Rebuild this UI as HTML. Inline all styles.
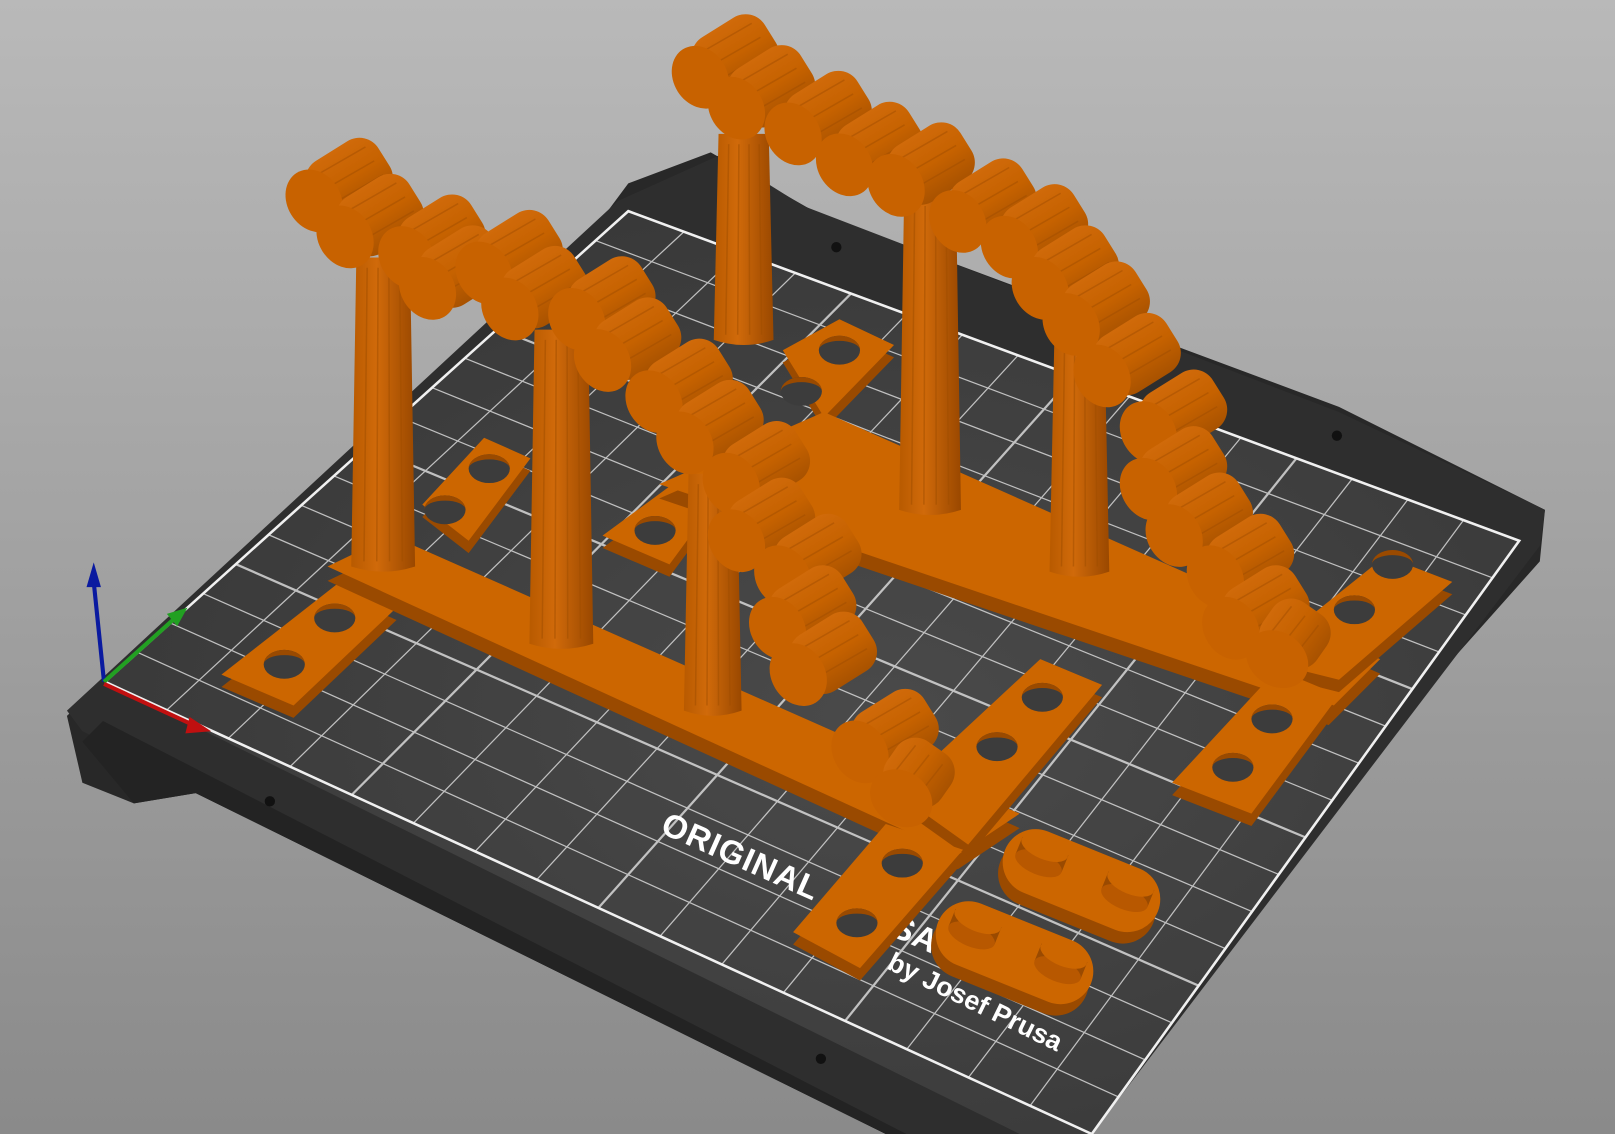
<!DOCTYPE html>
<html><head><meta charset="utf-8">
<style>
html,body{margin:0;padding:0;width:1615px;height:1134px;overflow:hidden;background:#a0a0a0}
svg{display:block}
</style></head>
<body>
<svg id="s" width="1615" height="1134" viewBox="0 0 1568 1101" preserveAspectRatio="none" xmlns="http://www.w3.org/2000/svg">
<defs>
<linearGradient id="bg" x1="0" y1="0" x2="0" y2="1">
<stop offset="0" stop-color="#b9b9b9"/><stop offset="1" stop-color="#8a8a8a"/>
</linearGradient>
<radialGradient id="bedg" cx="0.55" cy="0.55" r="0.6">
<stop offset="0" stop-color="#4a4a4a"/><stop offset="1" stop-color="#383838"/>
</radialGradient>
<linearGradient id="pil" x1="0" y1="0" x2="1" y2="0">
<stop offset="0" stop-color="#b85a00"/><stop offset="0.4" stop-color="#d06a0a"/><stop offset="1" stop-color="#9a4800"/>
</linearGradient>
<linearGradient id="logg" x1="0" y1="0" x2="0" y2="1">
<stop offset="0" stop-color="#d06a0a"/><stop offset="0.5" stop-color="#c66200"/><stop offset="1" stop-color="#a85200"/>
</linearGradient>
</defs>
<rect width="1568" height="1101" fill="url(#bg)"/>
<polygon points="65,695 80,760 130,780 190,770 860,1101 1000,1101 1495,545 1500,495 1300,395 790,205 690,148 610,178 590,205" fill="#282828"/>
<polygon points="65,690 600,195 700,150 780,200 1300,400 1500,495 1495,530 1060,1101 860,1101 80,710" fill="#2e2e2e"/>
<polygon points="80,720 130,780 190,770 860,1101 880,1101 100,700" fill="#232323"/>
<polygon id="grid" points="102,662 610,205 1475,525 1060,1101 990,1101" fill="url(#bedg)"/>
<g id="gl" stroke="#d8d8d8" stroke-width="1.3" opacity="0.85"></g>
<polyline points="102,662 610,205 1475,525 1060,1101" fill="none" stroke="#f0f0f0" stroke-width="2.5"/>
<line x1="102" y1="662" x2="1060" y2="1101" stroke="#f0f0f0" stroke-width="2.5"/>
<circle cx="812" cy="240" r="5" fill="#111"/><circle cx="1298" cy="423" r="5" fill="#111"/>
<circle cx="262" cy="778" r="5" fill="#111"/><circle cx="797" cy="1028" r="5" fill="#111"/>
<text x="640" y="808" transform="rotate(24 640 808)" fill="#fff" font-family="Liberation Sans, sans-serif" font-size="32" font-weight="bold" letter-spacing="1">ORIGINAL PRUSA</text>
<text x="860" y="940" transform="rotate(26 860 940)" fill="#fff" font-family="Liberation Sans, sans-serif" font-size="26" font-weight="bold">by Josef Prusa</text>
<line x1="101" y1="662" x2="91" y2="565" stroke="#0a1aa0" stroke-width="4"/><polygon points="84,570 91,546 98,570" fill="#0a1aa0"/>
<line x1="101" y1="662" x2="170" y2="600" stroke="#22a022" stroke-width="4"/><polygon points="162,596 182,590 172,608" fill="#22a022"/>
<line x1="101" y1="664" x2="188" y2="704" stroke="#c01010" stroke-width="4"/><polygon points="184,696 205,710 180,712" fill="#c01010"/>
<g id="obj"></g>
</svg>
<script>
var NS="http://www.w3.org/2000/svg";
function el(p,t,a){var e=document.createElementNS(NS,t);for(var k in a)e.setAttribute(k,a[k]);p.appendChild(e);return e;}
var gl=document.getElementById('gl');
var A=[102,662],B=[610,205],C=[1475,525],D=[1060,1101];
function L(p,q,t){return [p[0]+(q[0]-p[0])*t,p[1]+(q[1]-p[1])*t];}
var n=16;
for(var i=1;i<n;i++){var t=i/n;var p=L(A,B,t),q=L(D,C,t);el(gl,'line',{x1:p[0],y1:p[1],x2:q[0],y2:q[1],'stroke-width':i%4==0?2.2:1.2});
var r=L(A,D,t),s=L(B,C,t);el(gl,'line',{x1:r[0],y1:r[1],x2:s[0],y2:s[1],'stroke-width':i%4==0?2.2:1.2});}
var O=document.getElementById('obj');
var OR="#cc6600",DK="#9a4a00",MD="#b85800";
function slab(pts,th,holes){
 var g=el(O,'g',{});
 el(g,'polygon',{points:pts.map(function(p){return p[0]+','+(p[1]+th)}).join(' '),fill:DK});
 el(g,'polygon',{points:pts.map(function(p){return p.join(',')}).join(' '),fill:OR});
 (holes||[]).forEach(function(h){el(g,'ellipse',{cx:h[0],cy:h[1],rx:20,ry:14,fill:"#3c3c3c"});el(g,'path',{d:'M'+(h[0]-20)+','+h[1]+' A20,14 0 0 1 '+(h[0]+20)+','+h[1]+' A20,9 0 0 0 '+(h[0]-20)+','+h[1],fill:DK});});
}
slab([[760,340],[815,310],[868,335],[800,405]],12,[[815,340],[778,380]]);
slab([[585,520],[660,465],[700,480],[650,548]],12,[[636,515]]);
slab([[640,470],[800,400],[1340,640],[1290,690]],14,[]);
slab([[1220,640],[1345,540],[1410,565],[1300,660]],12,[[1352,548],[1315,592]]);
slab([[1138,760],[1240,650],[1300,675],[1215,790]],12,[[1235,698],[1197,745]]);
slab([[410,490],[470,425],[515,445],[455,525]],12,[[475,455],[432,495]]);
slab([[215,655],[330,565],[385,590],[285,685]],12,[[325,600],[276,645]]);
slab([[318,550],[380,520],[990,790],[930,830]],14,[]);
slab([[870,770],[1010,640],[1070,665],[940,820]],12,[[1012,677],[968,725]]);
slab([[770,905],[860,800],[935,825],[835,940]],12,[[876,838],[832,896]]);
function pill(cx,cy){var g=el(O,'g',{transform:'rotate(22 '+cx+' '+cy+')'});
el(g,'rect',{x:cx-80,y:cy-32+12,width:160,height:64,rx:32,fill:DK});
el(g,'rect',{x:cx-80,y:cy-32,width:160,height:64,rx:32,fill:OR});
[[-45],[45]].forEach(function(d){el(g,'rect',{x:cx+d[0]-24,y:cy-18,width:48,height:18,fill:DK});el(g,'ellipse',{cx:cx+d[0],cy:cy,rx:24,ry:11,fill:MD});el(g,'ellipse',{cx:cx+d[0],cy:cy-16,rx:24,ry:11,fill:"#cc6600"});});}
pill(1050,855);pill(985,925);
function pillar(x,y1,y2,w){var g=el(O,'g',{});
el(g,'path',{d:'M'+(x-w*0.42)+','+y1+' L'+(x+w*0.42)+','+y1+' L'+(x+w/2)+','+y2+' Q'+x+','+(y2+10)+' '+(x-w/2)+','+y2+' Z',fill:'url(#pil)'});
for(var i=0;i<4;i++){el(g,'line',{x1:x-w*0.25+i*w*0.17,y1:y1+10,x2:x-w*0.3+i*w*0.2,y2:y2-5,stroke:'#a04e00','stroke-width':1.5,opacity:0.5});}}
pillar(722,130,330,58);pillar(903,190,495,60);pillar(1048,330,555,58);
function log(cx,cy,ang,len){var g=el(O,'g',{transform:'translate('+cx+','+cy+') rotate('+ang+')'});
el(g,'rect',{x:0,y:-32,width:len,height:64,rx:22,fill:'url(#logg)'});
for(var i=0;i<3;i++)el(g,'line',{x1:14,y1:-20+i*16,x2:len-10,y2:-18+i*16,stroke:'#9e4c00','stroke-width':1.5,opacity:0.45});
el(g,'ellipse',{cx:0,cy:0,rx:26,ry:32,fill:'#c86200'});}
var R=[[680,75],[715,105],[770,130],[820,160],[870,180],[930,215],[980,240],[1010,280],[1040,315],[1070,365],[1115,420],[1115,475],[1140,520],[1180,560],[1195,610]];
R.forEach(function(p){log(p[0],p[1],-32,80);});
pillar(372,250,550,62);pillar(545,320,625,62);pillar(692,460,690,56);
var Lg=[[305,195],[335,230],[395,250],[415,280],[470,265],[495,300],[560,310],[585,350],[635,390],[665,430],[710,470],[715,525],[760,560],[755,610],[775,655],[835,730]];
Lg.forEach(function(p){log(p[0],p[1],-32,80);});
log(875,775,-55,60);log(1240,640,-55,60);
</script>
</body></html>
